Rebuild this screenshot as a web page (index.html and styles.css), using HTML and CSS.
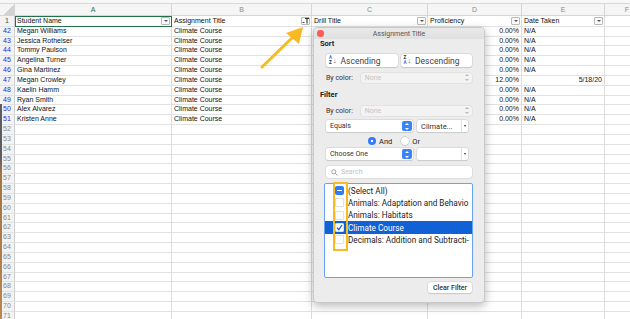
FILE: index.html
```html
<!DOCTYPE html>
<html lang="en">
<head>
    <meta charset="UTF-8">
    <title>Filter - Assignment Title</title>
    <link rel="stylesheet" href="styles.css">
</head>
<body>
    <div class="sheet">
        <div class="topstrip"></div>

        <!-- column letters -->
        <div class="row colhead">
            <div class="corner"></div>
            <div class="sel">A</div>
            <div>B</div>
            <div>C</div>
            <div>D</div>
            <div>E</div>
            <div>F</div>
        </div>

        <!-- header row -->
        <div class="row head">
            <div class="rn rn-sel">1</div>
            <div class="hcell active"><span>Student Name</span><span class="dd"></span></div>
            <div class="hcell"><span>Assignment Title</span><span class="dd filtered"><svg viewBox="0 0 9 8" width="9" height="8"><path d="M1.5 5.5h2" stroke="#333" stroke-width="0.9"/><path d="M4 1.5h4M6 1.5v5" stroke="#333" stroke-width="1.1"/></svg></span></div>
            <div class="hcell"><span>Drill Title</span><span class="dd"></span></div>
            <div class="hcell"><span>Proficiency</span><span class="dd"></span></div>
            <div class="hcell"><span>Date Taken</span><span class="dd"></span></div>
            <div></div>
        </div>

        <div class="row"><div class="rn rn-blue">42</div><div>Megan Williams</div><div>Climate Course</div><div></div><div class="num">0.00%</div><div>N/A</div><div></div></div>
        <div class="row"><div class="rn rn-blue">43</div><div>Jessica Rotheiser</div><div>Climate Course</div><div></div><div class="num">0.00%</div><div>N/A</div><div></div></div>
        <div class="row"><div class="rn rn-blue">44</div><div>Tommy Paulson</div><div>Climate Course</div><div></div><div class="num">0.00%</div><div>N/A</div><div></div></div>
        <div class="row"><div class="rn rn-blue">45</div><div>Angelina Turner</div><div>Climate Course</div><div></div><div class="num">0.00%</div><div>N/A</div><div></div></div>
        <div class="row"><div class="rn rn-blue">46</div><div>Gina Martinez</div><div>Climate Course</div><div></div><div class="num">0.00%</div><div>N/A</div><div></div></div>
        <div class="row"><div class="rn rn-blue">47</div><div>Megan Crowley</div><div>Climate Course</div><div></div><div class="num">12.00%</div><div class="num">5/18/20</div><div></div></div>
        <div class="row"><div class="rn rn-blue">48</div><div>Kaelin Hamm</div><div>Climate Course</div><div></div><div class="num">0.00%</div><div>N/A</div><div></div></div>
        <div class="row"><div class="rn rn-blue">49</div><div>Ryan Smith</div><div>Climate Course</div><div></div><div class="num">0.00%</div><div>N/A</div><div></div></div>
        <div class="row"><div class="rn rn-blue">50</div><div>Alex Alvarez</div><div>Climate Course</div><div></div><div class="num">0.00%</div><div>N/A</div><div></div></div>
        <div class="row"><div class="rn rn-blue">51</div><div>Kristen Anne</div><div>Climate Course</div><div></div><div class="num">0.00%</div><div>N/A</div><div></div></div>

        <div class="row"><div class="rn">52</div><div></div><div></div><div></div><div></div><div></div><div></div></div>
        <div class="row"><div class="rn">53</div><div></div><div></div><div></div><div></div><div></div><div></div></div>
        <div class="row"><div class="rn">54</div><div></div><div></div><div></div><div></div><div></div><div></div></div>
        <div class="row"><div class="rn">55</div><div></div><div></div><div></div><div></div><div></div><div></div></div>
        <div class="row"><div class="rn">56</div><div></div><div></div><div></div><div></div><div></div><div></div></div>
        <div class="row"><div class="rn">57</div><div></div><div></div><div></div><div></div><div></div><div></div></div>
        <div class="row"><div class="rn">58</div><div></div><div></div><div></div><div></div><div></div><div></div></div>
        <div class="row"><div class="rn">59</div><div></div><div></div><div></div><div></div><div></div><div></div></div>
        <div class="row"><div class="rn">60</div><div></div><div></div><div></div><div></div><div></div><div></div></div>
        <div class="row"><div class="rn">61</div><div></div><div></div><div></div><div></div><div></div><div></div></div>
        <div class="row"><div class="rn">62</div><div></div><div></div><div></div><div></div><div></div><div></div></div>
        <div class="row"><div class="rn">63</div><div></div><div></div><div></div><div></div><div></div><div></div></div>
        <div class="row"><div class="rn">64</div><div></div><div></div><div></div><div></div><div></div><div></div></div>
        <div class="row"><div class="rn">65</div><div></div><div></div><div></div><div></div><div></div><div></div></div>
        <div class="row"><div class="rn">66</div><div></div><div></div><div></div><div></div><div></div><div></div></div>
        <div class="row"><div class="rn">67</div><div></div><div></div><div></div><div></div><div></div><div></div></div>
        <div class="row"><div class="rn">68</div><div></div><div></div><div></div><div></div><div></div><div></div></div>
        <div class="row"><div class="rn">69</div><div></div><div></div><div></div><div></div><div></div><div></div></div>
        <div class="row"><div class="rn">70</div><div></div><div></div><div></div><div></div><div></div><div></div></div>
        <div class="row"><div class="rn">71</div><div></div><div></div><div></div><div></div><div></div><div></div></div>
    </div>

    <!-- desktop peeking at the window edge -->
    <div class="desk-edge"></div>

    <!-- callout arrow -->
    <svg class="arrow" viewBox="0 0 50 50" width="50" height="50">
        <path d="M7 47 L38 17" stroke="#f7b924" stroke-width="3" stroke-linecap="round"/>
        <polygon points="48,7 31,13 44,24" fill="#f7b924"/>
    </svg>

    <!-- filter popover -->
    <div class="popup">
        <div class="titlebar">
            <span class="close"></span>
            <span class="title">Assignment Title</span>
        </div>
        <div class="pbody">
            <div class="sec">Sort</div>
            <div class="sortbtns">
                <div class="btn"><span class="az"><b class="blue">A</b><b>Z</b></span><span class="down">↓</span>Ascending</div>
                <div class="btn"><span class="az"><b>Z</b><b class="blue">A</b></span><span class="down">↓</span>Descending</div>
            </div>
            <div class="field">
                <span class="lbl">By color:</span>
                <div class="select disabled"><span>None</span><span class="step"></span></div>
            </div>

            <div class="sec sec-filter">Filter</div>
            <div class="field field2">
                <span class="lbl">By color:</span>
                <div class="select disabled"><span>None</span><span class="step"></span></div>
            </div>
            <div class="pair">
                <div class="select main"><span>Equals</span><span class="step blue"></span></div>
                <div class="combo"><span>Climate...</span><span class="caret"></span></div>
            </div>
            <div class="radios">
                <span class="radio on"></span><span class="rlbl">And</span>
                <span class="radio"></span><span class="rlbl">Or</span>
            </div>
            <div class="pair pair2">
                <div class="select main"><span>Choose One</span><span class="step blue"></span></div>
                <div class="combo"><span></span><span class="caret"></span></div>
            </div>
            <div class="search">
                <svg viewBox="0 0 8 8" width="7" height="7"><circle cx="3.2" cy="3.2" r="2.4" fill="none" stroke="#888" stroke-width="0.9"/><path d="M5 5 L7.3 7.3" stroke="#888" stroke-width="1"/></svg>
                <span>Search</span>
            </div>
            <div class="list">
                <div class="item"><span class="cb mixed"></span>(Select All)</div>
                <div class="item"><span class="cb"></span>Animals: Adaptation and Behavio</div>
                <div class="item"><span class="cb"></span>Animals: Habitats</div>
                <div class="item selected"><span class="cb checked"><svg viewBox="0 0 9 9" width="9" height="9"><path d="M2 4.6 L3.8 6.6 L7 2" fill="none" stroke="#1160d6" stroke-width="1.3"/></svg></span>Climate Course</div>
                <div class="item"><span class="cb"></span>Decimals: Addition and Subtracti-</div>
                <div class="mark"></div>
            </div>
            <div class="foot">
                <div class="btn small">Clear Filter</div>
            </div>
        </div>
    </div>
</body>
</html>
```

FILE: styles.css
```css
/* Reset */
* {
    margin: 0;
    padding: 0;
    box-sizing: border-box;
}

body {
    width: 630px;
    height: 319px;
    overflow: hidden;
    position: relative;
    background: #fff;
    font-family: "Liberation Sans", Arial, sans-serif;
    color: #111;
}

/* Spreadsheet grid */
.topstrip {
    height: 4px;
    background: #f7f7f7;
    border-bottom: 1px solid #d9d9d9;
}

.row {
    display: grid;
    grid-template-columns: 15px 157px 140px 116px 94px 83px 45px;
    height: 9.83px;
}

.row > div {
    border-right: 1px solid #dcdcdc;
    border-bottom: 1px solid #e2e2e2;
    font-size: 7px;
    line-height: 8.8px;
    padding: 0 2px;
    white-space: nowrap;
    overflow: hidden;
}

.colhead {
    height: 12px;
    background: #f5f5f5;
}

.colhead > div {
    text-align: center;
    line-height: 11px;
    color: #8a8a8a;
    border-color: #d6d6d6;
}

.colhead .sel {
    color: #1f7346;
}

.corner {
    background: linear-gradient(135deg, transparent 60%, #d2d2d2 60%);
}

.row.head {
    height: 10.8px;
}

.head > div {
    line-height: 9.6px;
}

.hcell {
    display: flex;
    justify-content: space-between;
    align-items: center;
}

.active {
    outline: 1.5px solid #217346;
    outline-offset: -1px;
}

.dd {
    width: 9px;
    height: 8px;
    border: 1px solid #b8b8b8;
    border-radius: 1px;
    background: #fafafa;
    position: relative;
    flex-shrink: 0;
    margin-right: -1px;
}

.dd::after {
    content: "";
    position: absolute;
    left: 2px;
    top: 2.5px;
    border-left: 2px solid transparent;
    border-right: 2px solid transparent;
    border-top: 2.5px solid #555;
}

.dd.filtered::after {
    display: none;
}

.dd svg {
    display: block;
    margin: -1px 0 0 -1px;
}

.rn {
    background: #f3f3f3;
    text-align: center;
    color: #8a8a8a;
    border-right-color: #cfcfcf !important;
}

.rn-sel {
    color: #1f5a37;
}

.rn-blue {
    color: #2a2ae6;
}

.num {
    text-align: right;
}

.desk-edge {
    position: absolute;
    left: 0;
    top: 104px;
    width: 2px;
    height: 215px;
    background: linear-gradient(#5c5d63 0, #5c5d63 25%, #a27446 32%, #b8884f 100%);
}

.arrow {
    position: absolute;
    left: 255px;
    top: 20px;
}

/* Filter popover */
.popup {
    position: absolute;
    left: 313px;
    top: 27px;
    width: 172px;
    height: 276px;
    background: #ececec;
    border: 1px solid #c9c9c9;
    border-radius: 4px;
    box-shadow: 0 3px 10px rgba(0, 0, 0, 0.28);
    font-family: Roboto, "Liberation Sans", sans-serif;
    font-size: 7.5px;
    color: #2a2a2a;
    overflow: hidden;
}

.titlebar {
    height: 11px;
    position: relative;
    display: flex;
    align-items: center;
    justify-content: center;
    background: linear-gradient(#e9e9e9, #e0e0e0);
}

.close {
    position: absolute;
    left: 3px;
    top: 2px;
    width: 6.5px;
    height: 6.5px;
    border-radius: 50%;
    background: #fc5b57;
}

.title {
    font-size: 7px;
    color: #555;
}

.pbody {
    padding: 0 12px 0 12px;
}

.sec {
    margin-left: -6px;
    font-weight: bold;
    line-height: 10px;
    color: #222;
}

.sec-filter {
    margin-top: 7px;
}

.sortbtns {
    margin-top: 5px;
    display: flex;
    gap: 3px;
}

.btn {
    background: #fff;
    border-radius: 3px;
    box-shadow: 0 0 0 0.5px #cdcdcd, 0 0.5px 1px rgba(0, 0, 0, 0.18);
    display: flex;
    align-items: center;
    color: #333;
}

.sortbtns .btn {
    width: 72px;
    height: 13px;
    padding-left: 3px;
    font-size: 8.5px;
    color: #444;
}

.az {
    display: flex;
    flex-direction: column;
    font-size: 4.5px;
    line-height: 4.4px;
    margin-right: 1px;
}

.az b {
    color: #333;
}

.az .blue {
    color: #2f7cf6;
}

.down {
    font-size: 7px;
    margin-right: 4px;
}

.field {
    margin-top: 5px;
    height: 11px;
    display: flex;
    align-items: center;
}

.field2 {
    margin-top: 5px;
}

.lbl {
    width: 35px;
    font-size: 7px;
    color: #333;
}

.select {
    height: 10px;
    display: flex;
    align-items: center;
    justify-content: space-between;
    padding-left: 4px;
    border-radius: 2px;
    font-size: 7px;
}

.select.disabled {
    width: 112px;
    background: #f3f3f3;
    box-shadow: 0 0 0 0.5px #d8d8d8;
    color: #c4c4c4;
}

.step {
    width: 10px;
    height: 10px;
    position: relative;
}

.step::before,
.step::after {
    content: "";
    position: absolute;
    left: 3px;
    border-left: 2px solid transparent;
    border-right: 2px solid transparent;
}

.step::before {
    top: 1.5px;
    border-bottom: 2.5px solid #b8b8b8;
}

.step::after {
    bottom: 1.5px;
    border-top: 2.5px solid #b8b8b8;
}

.step.blue {
    background: #3b84f7;
    border-radius: 2px;
}

.step.blue::before {
    border-bottom-color: #fff;
}

.step.blue::after {
    border-top-color: #fff;
}

.pair {
    margin-top: 4px;
    height: 12px;
    display: flex;
    gap: 4px;
}

.pair2 {
    margin-top: 1px;
}

.select.main {
    width: 87px;
    height: 12px;
    background: #fff;
    box-shadow: 0 0 0 0.5px #cdcdcd, 0 0.5px 1px rgba(0, 0, 0, 0.15);
    padding-right: 1px;
    color: #333;
}

.select.main .step {
    height: 10px;
}

.combo {
    width: 51px;
    height: 12px;
    display: flex;
    align-items: center;
    justify-content: space-between;
    padding-left: 4px;
    background: #fff;
    border-radius: 2px;
    box-shadow: 0 0 0 0.5px #cdcdcd, 0 0.5px 1px rgba(0, 0, 0, 0.15);
    font-size: 7.5px;
    color: #333;
}

.caret {
    width: 7px;
    height: 12px;
    border-left: 0.5px solid #e2e2e2;
    position: relative;
}

.caret::after {
    content: "";
    position: absolute;
    left: 2px;
    top: 5px;
    border-left: 1.5px solid transparent;
    border-right: 1.5px solid transparent;
    border-top: 2px solid #333;
}

.radios {
    margin-top: 3px;
    height: 12px;
    display: flex;
    align-items: center;
    padding-left: 42px;
}

.radio {
    width: 8px;
    height: 8px;
    border-radius: 50%;
    background: #fff;
    box-shadow: 0 0 0 0.5px #b9b9b9, 0 0.5px 1px rgba(0, 0, 0, 0.15);
}

.radio.on {
    background: radial-gradient(circle, #fff 0 1.3px, #2f7cf6 1.6px);
    box-shadow: none;
}

.rlbl {
    margin: 0 9px 0 3px;
    font-size: 7.5px;
    color: #222;
}

.search {
    margin-top: 6px;
    height: 12px;
    display: flex;
    align-items: center;
    gap: 3px;
    padding-left: 5px;
    background: #fff;
    border-radius: 3px;
    box-shadow: 0 0 0 0.5px #cfcfcf;
    color: #c2c2c2;
    font-size: 7px;
}

.list {
    position: relative;
    margin: 5px -1px 0 -2px;
    height: 95px;
    background: #fff;
    border: 1.5px solid #67a2f5;
    border-radius: 2px;
    padding-top: 0.5px;
}

.item {
    height: 12.3px;
    display: flex;
    align-items: center;
    padding-left: 10px;
    font-size: 8.2px;
    color: #222;
    white-space: nowrap;
    overflow: hidden;
}

.item.selected {
    background: #1160d6;
    color: #fff;
}

.cb {
    width: 9px;
    height: 9px;
    margin-right: 4px;
    flex-shrink: 0;
    background: #fff;
    border-radius: 2px;
    box-shadow: inset 0 0 0 0.5px #c2c2c2;
}

.cb.mixed {
    background: #2f7cf6;
    box-shadow: none;
    position: relative;
}

.cb.mixed::after {
    content: "";
    position: absolute;
    left: 2px;
    right: 2px;
    top: 4px;
    height: 1.2px;
    background: #fff;
}

.cb svg {
    display: block;
}

.mark {
    position: absolute;
    left: 7.5px;
    top: -2.5px;
    width: 15px;
    height: 69px;
    border: 2px solid #f7b924;
}

.foot {
    margin-top: 4px;
    display: flex;
    justify-content: flex-end;
}

.btn.small {
    width: 44px;
    height: 11px;
    justify-content: center;
    font-size: 7px;
    font-weight: 500;
    color: #333;
}
```
